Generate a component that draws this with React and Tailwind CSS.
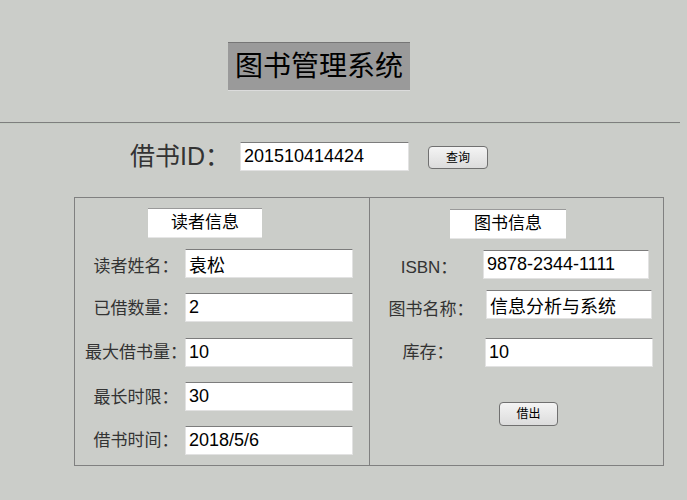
const font = "font-['Liberation_Sans','Noto_Sans_CJK_SC',sans-serif]";

const inputCls =
  "h-[29px] bg-white border border-[#e2e2e2] border-t-[#7c7c7c] px-[3px] text-[18px] leading-[27px] text-black outline-none";

const btnCls =
  "rounded-[4px] border border-[#707070] bg-gradient-to-b from-[#f4f4f4] to-[#dcdcdc] text-[12px] text-black";

const readerRows = [
  { label: "读者姓名：", value: "袁松", mt: "mt-[11px]", pad: "pt-[3px]" },
  { label: "已借数量：", value: "2", mt: "mt-[15px]", pad: "pt-[1px]" },
  { label: "最大借书量：", value: "10", mt: "mt-[16px]", pad: "pt-0" },
  { label: "最长时限：", value: "30", mt: "mt-[15px]", pad: "pt-[1px]" },
  { label: "借书时间：", value: "2018/5/6", mt: "mt-[15px]", pad: "pt-0" },
];

const Field = ({ label, value, mt, pad, labelCls, inputW }) => (
  <div className={`flex h-[29px] items-start ${mt}`}>
    <div
      className={`flex justify-center whitespace-nowrap text-[17px] leading-[29px] text-[#333] ${pad} ${labelCls}`}
    >
      {label}
    </div>
    <input readOnly defaultValue={value} className={`${inputCls} ${inputW}`} />
  </div>
);

const SectionTitle = ({ children, className }) => (
  <div
    className={`flex h-[30px] items-center justify-center border-t border-t-[#9a9a9a] border-b border-b-[#e6e6e6] bg-white text-[17px] text-black ${className}`}
  >
    {children}
  </div>
);

export default function App() {
  return (
    <div className={`h-[500px] w-[687px] overflow-hidden bg-[#cbcdc9] ${font}`}>
      <div className="pl-[228px] pt-[42px]">
        <div className="flex h-[49px] w-[182px] items-center justify-center border-t border-t-[#767676] border-b border-b-[#dcdcdc] bg-[#9a9a9a] text-[28px] text-black">
          图书管理系统
        </div>
      </div>

      <div className="mt-[31px] w-[680px] border-t border-t-[#7e7e7e] border-b border-b-[#c4cbc2]" />

      <div className="mt-[18px] flex h-[29px] items-center pl-[130px]">
        <div className="w-[110px] whitespace-nowrap text-[25px] leading-[29px] text-[#333]">借书ID：</div>
        <input readOnly defaultValue="201510414424" className={`${inputCls} w-[169px]`} />
        <button type="button" className={`${btnCls} ml-[19px] mt-[2px] h-[23px] w-[60px]`}>
          查询
        </button>
      </div>

      <div className="ml-[74px] mt-[26px] flex h-[269px] w-[590px] border border-[#808080]">
        <div className="w-[295px] border-r border-[#808080] pt-[10px]">
          <SectionTitle className="ml-[73px] w-[114px]">读者信息</SectionTitle>
          {readerRows.map((r) => (
            <Field
              key={r.label}
              label={r.label}
              value={r.value}
              mt={r.mt}
              pad={r.pad}
              labelCls="ml-[12px] w-[98px]"
              inputW="w-[168px]"
            />
          ))}
        </div>

        <div className="flex-1 pt-[11px]">
          <SectionTitle className="ml-[80px] h-[29px] w-[116px]">图书信息</SectionTitle>
          <Field
            label="ISBN："
            value="9878-2344-1111"
            mt="mt-[11px]"
            pad="pt-[3px]"
            labelCls="ml-[5px] w-[108px]"
            inputW="w-[166px]"
          />
          <Field
            label="图书名称："
            value="信息分析与系统"
            mt="mt-[11px]"
            pad="pt-[5px]"
            labelCls="ml-[6px] w-[110px]"
            inputW="w-[166px]"
          />
          <Field
            label="库存："
            value="10"
            mt="mt-[19px]"
            pad="pt-0"
            labelCls="ml-[5px] w-[106px]"
            inputW="ml-[4px] w-[168px]"
          />
          <button type="button" className={`${btnCls} ml-[129px] mt-[35px] h-[24px] w-[59px]`}>
            借出
          </button>
        </div>
      </div>
    </div>
  );
}
